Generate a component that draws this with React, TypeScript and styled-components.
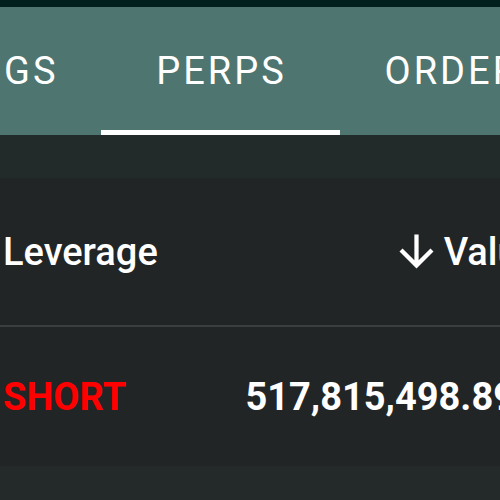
import React from "react";
import styled, { createGlobalStyle } from "styled-components";

const GlobalStyle = createGlobalStyle`
  html, body { margin: 0; padding: 0; }
  body {
    background: #232a29;
    font-family: Roboto, "Noto Sans", Arial, sans-serif;
    overflow: hidden;
    width: 500px;
    height: 500px;
  }
`;

const Page = styled.div`
  display: flex;
  flex-direction: column;
  width: 500px;
  height: 500px;
  overflow: hidden;
  background: #232a29;
`;

const TopStrip = styled.div`
  height: 7px;
  background: #01201d;
  flex: none;
`;

const TabBar = styled.div`
  height: 128px;
  background: #4e756f;
  overflow: hidden;
  display: flex;
  flex: none;
`;

const TabStrip = styled.div<{ $scroll: number }>`
  display: flex;
  margin-left: ${(p) => -p.$scroll}px;
`;

const Tab = styled.div<{ $active?: boolean }>`
  position: relative;
  flex: none;
  min-width: 239px;
  box-sizing: border-box;
  padding: 0 42px;
  display: flex;
  align-items: center;
  justify-content: center;
  color: #ffffff;
  font-size: 38px;
  font-weight: 400;
  letter-spacing: 3px;
  text-indent: 3px;
  text-transform: uppercase;
  white-space: nowrap;
  &::after {
    content: "";
    display: ${(p) => (p.$active ? "block" : "none")};
    position: absolute;
    left: 0;
    right: 0;
    bottom: 0;
    height: 5px;
    background: #ffffff;
  }
`;

const Band = styled.div`
  height: 43px;
  background: #232b2a;
  flex: none;
`;

const TableWrap = styled.div`
  background: #222526;
  overflow: hidden;
  flex: none;
`;

const Table = styled.div`
  display: flex;
  flex-direction: column;
  margin-left: -39px;
  width: 640px;
`;

const Row = styled.div<{ $head?: boolean }>`
  display: grid;
  grid-template-columns: 285px 335px;
  height: ${(p) => (p.$head ? "147px" : "139px")};
  border-bottom: ${(p) => (p.$head ? "2px solid #3b3e3f" : "none")};
  align-items: center;
`;

const Cell = styled.div<{ $align?: "left" | "right"; $head?: boolean; $color?: string }>`
  padding: 0 ${(p) => (p.$align === "right" && !p.$head ? "66px" : "42px")} 0 42px;
  display: flex;
  align-items: center;
  justify-content: ${(p) => (p.$align === "right" ? "flex-end" : "flex-start")};
  font-size: 38px;
  font-weight: ${(p) => (p.$head ? 500 : 700)};
  color: ${(p) => p.$color || "#ffffff"};
  white-space: nowrap;
`;

const SortIcon = styled.svg`
  width: 51px;
  height: 51px;
  margin-right: 2px;
  fill: #ffffff;
  flex: none;
`;

const Bottom = styled.div`
  flex: 1;
  background: #232a29;
`;

const tabs = ["Holdings", "Perps", "Orders"];

export default function App() {
  return (
    <Page>
      <GlobalStyle />
      <TopStrip />
      <TabBar>
        <TabStrip $scroll={195}>
          {tabs.map((t) => (
            <Tab key={t} $active={t === "Perps"}>
              {t}
            </Tab>
          ))}
        </TabStrip>
      </TabBar>
      <Band />
      <TableWrap>
        <Table>
          <Row $head>
            <Cell $head>Leverage</Cell>
            <Cell $head $align="right">
              <SortIcon viewBox="0 0 24 24">
                <path d="M20 12l-1.41-1.41L13 16.17V4h-2v12.17l-5.58-5.59L4 12l8 8 8-8z" />
              </SortIcon>
              Value
            </Cell>
          </Row>
          <Row>
            <Cell $color="#ff0000">SHORT</Cell>
            <Cell $align="right">517,815,498.89</Cell>
          </Row>
        </Table>
      </TableWrap>
      <Bottom />
    </Page>
  );
}
